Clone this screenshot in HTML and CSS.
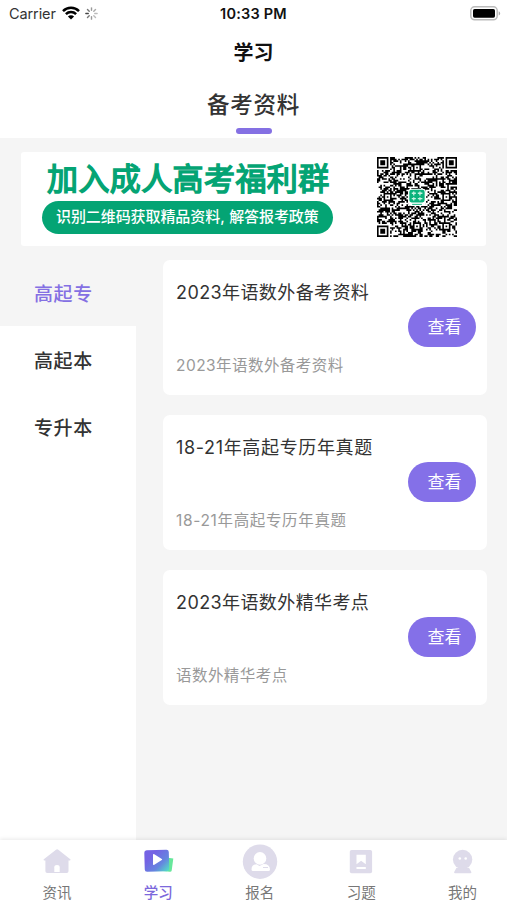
FILE: index.html
```html
<!DOCTYPE html>
<html lang="zh-CN">
<head>
<meta charset="utf-8">
<title>学习</title>
<link rel="stylesheet" href="styles.css">
</head>
<body>
<div class="app">
  <header class="status">
    <div class="status-left">
      <span class="carrier">Carrier</span>
      <svg class="wifi" viewBox="0 0 18 14" width="18" height="14"><g fill="none" stroke="#000" stroke-width="2.5"><path d="M1 5.1a11.3 11.3 0 0 1 16 0"/><path d="M3.9 8.2a7.2 7.2 0 0 1 10.2 0"/></g><path d="M9 13.6L5.9 10.6a4.4 4.4 0 0 1 6.2 0z"/></svg>
      <svg class="spinner" viewBox="-6 -6 12 12" width="13" height="13"><g stroke-width="1.3" stroke-linecap="round"><path d="M0-3V-5.2" stroke="#999"/><path d="M2.1-2.1L3.7-3.7" stroke="#aaa"/><path d="M3 0H5.2" stroke="#bbb"/><path d="M2.1 2.1L3.7 3.7" stroke="#bbb"/><path d="M0 3V5.2" stroke="#999"/><path d="M-2.1 2.1L-3.7 3.7" stroke="#777"/><path d="M-3 0H-5.2" stroke="#444"/><path d="M-2.1-2.1L-3.7-3.7" stroke="#777"/></g></svg>
    </div>
    <div class="time">10:33 PM</div>
    <div class="status-right">
      <svg viewBox="0 0 31 15" width="31" height="15"><rect x=".8" y=".8" width="26.4" height="13" rx="3.8" fill="#fff" stroke="#bbb" stroke-width="1.5"/><rect x="3" y="3" width="22" height="8.7" rx="1.6"/><path d="M28.7 5.2a2.4 2.4 0 0 1 0 4.4z" fill="#aaa"/></svg>
    </div>
  </header>
  <h1 class="title">学习</h1>
  <div class="tab"><span>备考资料</span></div>
  <section class="banner">
    <div class="banner-text">
      <div class="banner-title">加入成人高考福利群</div>
      <div class="banner-pill"><span>识别二维码获取精品资料<i>,</i>解答报考政策</span></div>
    </div>
    <svg class="qr" viewBox="0 0 49 49" width="80" height="80">
      <path id="modules"/>
      <rect x="19" y="19.5" width="11" height="10.5" rx="2" fill="#fff"/>
      <rect x="19.8" y="20" width="9.4" height="7.8" rx="1.4" fill="#0bb37c"/>
      <path d="M21.3 22.2h2.5m1.2 0h2.8M22.5 21.2v2.4m3.8-2.4v2.4M21.3 25.5h2.5m1.2 0h2.8M22.5 24.7v2m3.8-2v2" stroke="#c9f3e2" stroke-width=".8"/>
      <path d="M21.5 29h6" stroke="#0bb37c" stroke-width=".6"/>
    </svg>
  </section>
  <main class="content">
    <nav class="side">
      <div class="side-item active">高起专</div>
      <div class="side-item">高起本</div>
      <div class="side-item">专升本</div>
    </nav>
    <div class="list">
      <article class="card"><h2>2023年语数外备考资料</h2><button>查看</button><p>2023年语数外备考资料</p></article>
      <article class="card"><h2 class="range">18-21年高起专历年真题</h2><button>查看</button><p class="range">18-21年高起专历年真题</p></article>
      <article class="card"><h2>2023年语数外精华考点</h2><button>查看</button><p>语数外精华考点</p></article>
    </div>
  </main>
  <footer class="tabbar">
    <div class="tab-item">
      <svg viewBox="0 0 40 40" width="40" height="40"><path d="M19 9.800a1.700 1.700 0 0 1 2.300 0L33.300 19.300c.5.5.3 1.200-.5 1.200H31.500v10.700q0 1.800-1.800 1.800H10.200q-1.800 0-1.800-1.800V20.500H7.300c-.8 0-1-.7-.5-1.200z" fill="#dedbea"/><path d="M17.300 32v-4.700q0-2.300 2.700-2.300t2.700 2.300v4.700z" fill="#fff"/></svg>
      <span>资讯</span>
    </div>
    <div class="tab-item active">
      <svg viewBox="0 0 40 40" width="40" height="40"><defs><linearGradient id="g" x1="0" y1="0" x2="1" y2=".9"><stop offset=".3" stop-color="#7462e4"/><stop offset=".7" stop-color="#6586df"/><stop offset="1" stop-color="#53d9c8"/></linearGradient></defs><path d="M28 17.500l7.300 1-1.600 12q-.2 1.500-2 1.300l-9-1z" fill="#67e79b"/><rect x="6.500" y="10" width="24.500" height="21.500" rx="2.400" fill="url(#g)" transform="rotate(-1.500 19 20)"/><path d="M15 15v9q0 1.500 1.300.7l7.500-4.700q.8-.5 0-1l-7.500-4.700q-1.300-.8-1.300.7z" fill="#fff"/></svg>
      <span>学习</span>
    </div>
    <div class="tab-item">
      <svg viewBox="0 0 40 40" width="40" height="40"><circle cx="20" cy="21.700" r="17.200" fill="#dedbea"/><circle cx="20" cy="18.400" r="6.300" fill="#fff"/><path d="M11.500 29.500q0-5.200 5-5.200l3 1.800 4-2.200q6.500 0 6.500 5.600 0 1.500-1.500 1.500H13q-1.500 0-1.500-1.500z" fill="#fff"/><path d="M23 27.500h5" stroke="#dedbea"/></svg>
      <span>报名</span>
    </div>
    <div class="tab-item">
      <svg viewBox="0 0 40 40" width="40" height="40"><rect x="8.800" y="10" width="22.300" height="23.300" rx="1.800" fill="#dedbea"/><path d="M15.500 14.800h9.300v9.400l-4.700-3.500-4.600 3.500zM15.500 27h9.300v2h-9.300z" fill="#fff"/></svg>
      <span>习题</span>
    </div>
    <div class="tab-item">
      <svg viewBox="0 0 40 40" width="40" height="40"><path d="M12 33.200q-1.500 0-.7-1.400l2.200-4h12.500l2.200 4q.8 1.400-.7 1.400z" fill="#dedbea"/><circle cx="19.600" cy="19.500" r="9.700" fill="#dedbea"/><circle cx="16.800" cy="18.500" r="1.300" fill="#fff"/><circle cx="22.700" cy="18.500" r="1.300" fill="#fff"/></svg>
      <span>我的</span>
    </div>
  </footer>
</div>
<script src="qr.js"></script>
</body>
</html>
```
FILE: styles.css
```css
* { box-sizing: border-box; margin: 0; padding: 0; }
body { background: #f5f5f5; font-family: Inter, "Noto Sans CJK SC", sans-serif; color: #333; }
.app { width: 507px; height: 900px; display: flex; flex-direction: column; overflow: hidden; }
.status { height: 28px; background: #fff; display: grid; grid-template-columns: 1fr auto 1fr; align-items: center; flex: none; color: #111; }
.status-left { display: flex; align-items: center; padding-left: 9px; }
.carrier { font-size: 14.500px; line-height: 28px; color: #333; letter-spacing: -.1px; }
.wifi { margin: -2px 0 0 6px; }
.spinner { margin: -1px 0 0 5px; }
.time { font-size: 14.500px; font-weight: 600; letter-spacing: .2px; padding-bottom: 1px; }
.status-right { display: flex; justify-content: flex-end; padding: 0 6px 1px 0; }
.title { height: 48px; background: #fff; flex: none; text-align: center; font-size: 20px; line-height: 50px; font-weight: 700; color: #111; }
.tab { height: 62px; background: #fff; flex: none; display: flex; flex-direction: column; align-items: center; font-size: 22.500px; font-weight: 500; letter-spacing: .7px; }
.tab span { height: 52px; line-height: 57px; }
.tab::after { content: ""; width: 36px; height: 6px; border-radius: 3px; background: #8470e3; flex: none; }
.banner { margin: 14px 21px 0; height: 94px; flex: none; background: #fff; border-radius: 3px; display: flex; justify-content: space-between; padding: 5px 29px 0 21px; }
.banner-text { width: 291px; }
.banner-title { padding-left: 5px; height: 44px; line-height: 43px; font-size: 31px; font-weight: 400; letter-spacing: .4px; color: #04a474; -webkit-text-stroke: 1.5px #04a474; white-space: nowrap; }
.banner-pill { height: 33px; border-radius: 17px; background: #04a474; color: #fff; font-size: 15px; line-height: 32px; font-weight: 500; padding-left: 14px; white-space: nowrap; letter-spacing: -.08px; }
.banner-pill i { font-style: normal; display: inline-block; width: 9px; }
.content { display: flex; flex: 1; margin-top: 14px; }
.side { width: 136px; background: #fff; }
.side-item { height: 67px; line-height: 72px; padding-left: 34px; font-size: 19px; font-weight: 500; letter-spacing: .6px; }
.side-item.active { height: 66px; line-height: 69px; background: #f5f5f5; color: #8470e3; }
.list { padding: 0 20px 0 27px; flex: 1; display: flex; flex-direction: column; gap: 20px; }
.card { height: 135px; background: #fff; border-radius: 7px; display: flex; flex-direction: column; padding: 17px 11px 0 14px; }
.card h2 { font-size: 18px; line-height: 31px; height: 30px; font-weight: 400; letter-spacing: .4px; margin-left: -1px; }
.card button { align-self: flex-end; width: 68px; height: 40px; border: 0; border-radius: 20px; background: #8470e8; color: #fff; font: inherit; font-size: 17px; padding: 1px 0 0 5px; line-height: 39px; }
.card p { font-size: 15.500px; line-height: 24px; margin: 7px 0 0 -1px; color: #999; letter-spacing: .45px; }
.card .range { letter-spacing: .65px; }
.tabbar { height: 60px; flex: none; display: flex; background: #fff; box-shadow: 0 -1px 4px rgba(0,0,0,.09); z-index: 1; }
.tab-item { flex: 1; padding-left: 12.500px; display: flex; flex-direction: column; align-items: center; font-size: 14.500px; color: #777; }
.tab-item svg { flex: none; }
.tab-item span { line-height: 26px; }
.tab-item.active { color: #7c68dc; font-weight: 500; }
```
FILE: qr.js
```js
const size = 49;
let seed = 8;
const finder = [[0, 0], [42, 0], [0, 42]];
const marks = [[24, 6], [6, 24], [42, 24], [24, 42], [42, 42]];
function filled(x, y) {
  for (const [fx, fy] of finder) {
    const d = Math.max(Math.abs(x - fx - 3), Math.abs(y - fy - 3));
    if (d <= 4) return d === 3 || d <= 1;
  }
  for (const [mx, my] of marks) {
    const d = Math.max(Math.abs(x - mx), Math.abs(y - my));
    if (d <= 2) return d !== 1;
  }
  seed = (seed * 1664525 + 1013904223) >>> 0;
  return seed / 4294967296 < 0.53;
}
let path = "";
for (let y = 0; y < size; y++)
  for (let x = 0; x < size; x++)
    if (filled(x, y)) path += `M${x} ${y}h1v1h-1z`;
document.getElementById("modules").setAttribute("d", path);
```
